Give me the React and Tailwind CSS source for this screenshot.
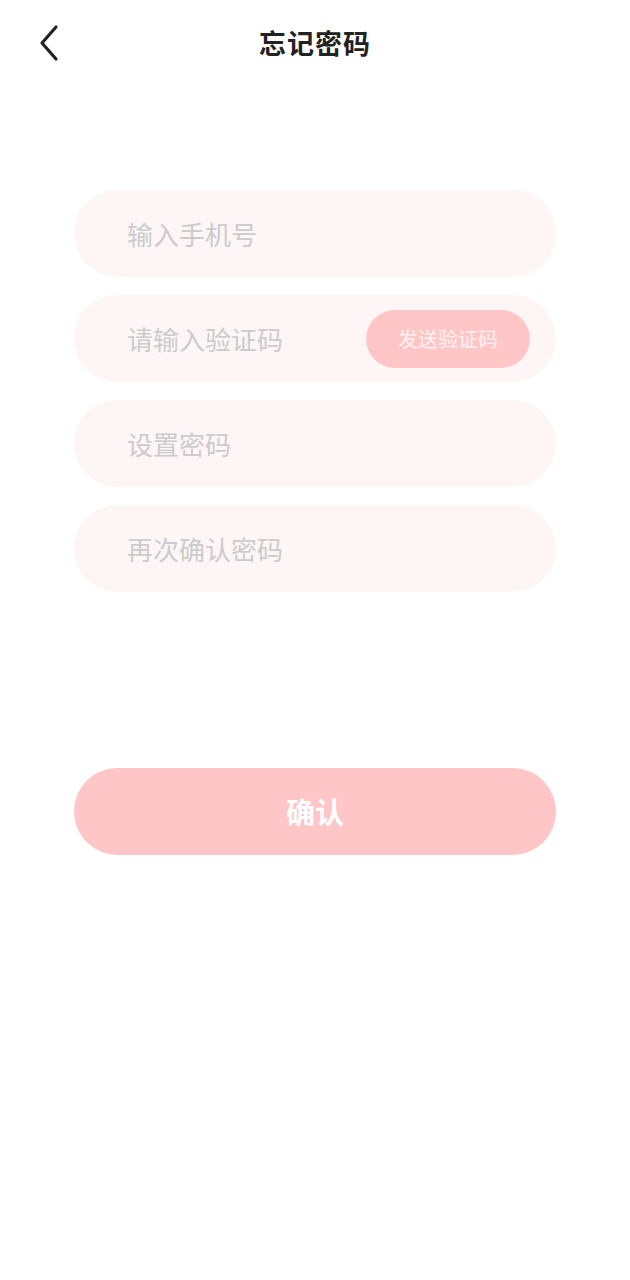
import React, { useState } from 'react';

const font = { fontFamily: '"Noto Sans CJK SC", "Noto Sans", sans-serif' };

const Field = ({ placeholder, children, type = 'text' }) => {
  const [value, setValue] = useState('');
  return (
    <div className="flex items-center h-[87px] rounded-full bg-[#fef6f6] pl-[53px] pr-[26px]">
      <input
        type={type}
        value={value}
        onChange={(e) => setValue(e.target.value)}
        placeholder={placeholder}
        style={font}
        className="flex-1 min-w-0 bg-transparent outline-none text-[26px] text-[#333] placeholder:text-[#cbcbcb]"
      />
      {children}
    </div>
  );
};

const App = () => {
  return (
    <div className="w-[630px] h-[1280px] bg-white" style={font}>
      {/* Header */}
      <div className="relative flex items-center justify-center h-[86px]">
        <button className="absolute left-[30px] top-[20px] w-[40px] h-[44px] flex items-center justify-center">
          <svg width="26" height="40" viewBox="0 0 26 40" fill="none">
            <path d="M19 5 L5 21 L19 37" stroke="#222" strokeWidth="3.2" strokeLinecap="round" strokeLinejoin="round" />
          </svg>
        </button>
        <h1 className="text-[27px] font-semibold text-[#222] tracking-[1px]">忘记密码</h1>
      </div>

      {/* Form */}
      <div className="flex flex-col gap-[18px] mx-[74px] mt-[104px]">
        <Field placeholder="输入手机号" />
        <Field placeholder="请输入验证码">
          <button className="h-[58px] w-[164px] shrink-0 rounded-full bg-[#fec6c6] text-[20px] text-[#fff2f2]">
            发送验证码
          </button>
        </Field>
        <Field placeholder="设置密码" type="password" />
        <Field placeholder="再次确认密码" type="password" />
      </div>

      <div className="mx-[74px] mt-[176px]">
        <button className="w-full h-[87px] rounded-full bg-[#fec6c6] text-white text-[29px] font-bold">
          确认
        </button>
      </div>
    </div>
  );
};

export default App;
